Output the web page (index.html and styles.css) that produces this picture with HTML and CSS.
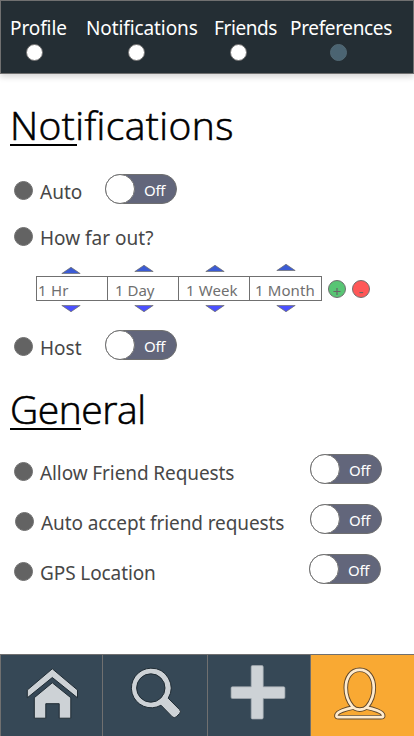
FILE: index.html
```html
<!DOCTYPE html>
<html lang="en">
<head>
<meta charset="utf-8">
<title>Preferences</title>
<link rel="stylesheet" href="styles.css">
</head>
<body>
<div class="app">
  <header class="topnav">
    <a class="nav-item profile"><span>Profile</span><i class="nav-dot"></i></a>
    <a class="nav-item notifications"><span>Notifications</span><i class="nav-dot"></i></a>
    <a class="nav-item friends"><span>Friends</span><i class="nav-dot"></i></a>
    <a class="nav-item preferences"><span>Preferences</span><i class="nav-dot current"></i></a>
  </header>

  <main class="content">
    <section class="section-notifications">
      <h1 class="title title-notifications">Notifications</h1>
      <div class="row row-auto"><i class="bullet"></i><span class="label auto">Auto</span><div class="toggle"><i class="knob"></i><span>Off</span></div></div>
      <div class="row row-far"><i class="bullet"></i><span class="label far">How far out?</span></div>
      <div class="stepper-row">
        <div class="stepper">
          <div class="step hr"><svg class="up" viewBox="0 0 20 7"><path d="M.8 6.600 10 .3l9.200 6.300z"/></svg><div class="cell"><span>1 Hr</span></div><svg class="down" viewBox="0 0 20 7"><path d="M.8.4 10 6.700 19.200.4z"/></svg></div>
          <div class="step day"><svg class="up" viewBox="0 0 20 7"><path d="M.8 6.600 10 .3l9.200 6.300z"/></svg><div class="cell"><span>1 Day</span></div><svg class="down" viewBox="0 0 20 7"><path d="M.8.4 10 6.700 19.200.4z"/></svg></div>
          <div class="step week"><svg class="up" viewBox="0 0 20 7"><path d="M.8 6.600 10 .3l9.200 6.300z"/></svg><div class="cell"><span>1 Week</span></div><svg class="down" viewBox="0 0 20 7"><path d="M.8.4 10 6.700 19.200.4z"/></svg></div>
          <div class="step month"><svg class="up" viewBox="0 0 20 7"><path d="M.8 6.600 10 .3l9.200 6.300z"/></svg><div class="cell"><span>1 Month</span></div><svg class="down" viewBox="0 0 20 7"><path d="M.8.4 10 6.700 19.200.4z"/></svg></div>
        </div>
        <button class="round add">+</button>
        <button class="round remove">-</button>
      </div>
      <div class="row row-host"><i class="bullet"></i><span class="label host">Host</span><div class="toggle"><i class="knob"></i><span>Off</span></div></div>
    </section>

    <section class="section-general">
      <h1 class="title title-general">General</h1>
      <div class="row wide"><i class="bullet"></i><span class="label allow">Allow Friend Requests</span><div class="toggle"><i class="knob"></i><span>Off</span></div></div>
      <div class="row wide accept-row"><i class="bullet"></i><span class="label accept">Auto accept friend requests</span><div class="toggle"><i class="knob"></i><span>Off</span></div></div>
      <div class="row wide gps-row"><i class="bullet"></i><span class="label gps">GPS Location</span><div class="toggle"><i class="knob"></i><span>Off</span></div></div>
    </section>
  </main>

  <nav class="tabbar">
    <a class="tab"><svg viewBox="0 0 103 81"><g class="glyph"><path d="M51.3 13.8 76.5 35v7.8L51.3 22.5 26.3 42.8V35z"/><path d="M51.3 27.8 69.8 42.7v20.5H58.2V48.7H44.8v14.5H33.3V42.7z"/></g></svg></a>
    <a class="tab"><svg viewBox="0 0 103 81"><path class="glyph" fill-rule="evenodd" d="M47.8 13.2a19.8 19.8 0 1 0 10.2 37l11.2 11.5q2 2 4.1.1l3.2-3.2q2-2 0-4L65.2 43.2A19.8 19.8 0 0 0 47.8 13.2zm0 5.6a14.2 14.2 0 1 1 0 28.4 14.2 14.2 0 0 1 0-28.4z"/></svg></a>
    <a class="tab"><svg viewBox="0 0 103 81"><path class="plus" d="M44.500 10.600h9.400q1.300 0 1.300 1.300v19.900h20.400q1.300 0 1.300 1.300v9.100q0 1.300-1.300 1.300H55.200v19.200q0 1.300-1.300 1.300H44.500q-1.300 0-1.300-1.300V43.500H24.400q-1.300 0-1.300-1.300v-9.100q0-1.300 1.300-1.300h18.800V11.900q0-1.300 1.300-1.300z"/></svg></a>
    <a class="tab selected"><svg viewBox="0 0 103 81"><g class="person"><path d="M48.800 14.800c-9 0-14 8.400-14 18 0 9 3.200 14.800 6.600 18.800 2.300 2.600 4.600 3 7.400 3s5.100-.4 7.400-3c3.400-4 6.600-9.800 6.600-18.800 0-9.600-5-18-14-18z"/><path d="M42.300 52.600C35 53.700 26.200 57 25.500 60c-.5 2 .5 2.200 2.500 2.200h41.600c2 0 3-.2 2.500-2.200-.7-3-9.500-6.300-16.800-7.400"/></g><g class="person-light"><path d="M48.800 14.800c-9 0-14 8.400-14 18 0 9 3.200 14.800 6.600 18.800 2.300 2.600 4.600 3 7.400 3s5.100-.4 7.400-3c3.400-4 6.600-9.800 6.600-18.800 0-9.600-5-18-14-18z"/><path d="M42.300 52.600C35 53.700 26.200 57 25.500 60c-.5 2 .5 2.200 2.500 2.200h41.600c2 0 3-.2 2.500-2.200-.7-3-9.500-6.300-16.800-7.400"/></g></svg></a>
  </nav>
</div>
</body>
</html>
```
FILE: styles.css
```css
* { box-sizing: border-box; }
body { margin: 0; background: #fff; font-family: "Noto Sans", "Open Sans", sans-serif; }
i { display: block; }
.app { width: 414px; height: 736px; display: flex; flex-direction: column; overflow: hidden; }

.topnav { height: 74px; flex: none; display: flex; padding: 13px 0 0 9px; background: #242e34; border: 1px solid #707070; box-shadow: 0 3px 6px rgba(0,0,0,.16); color: #fff; }
.nav-item { height: 50px; font-size: 19px; line-height: 28px; letter-spacing: -.1px; white-space: nowrap; }
.nav-item span { display: block; }
.nav-dot { width: 17px; height: 17px; border-radius: 50%; background: #fff; border: 1px solid #707070; margin-top: 2px; }
.nav-dot.current { background: #4b6472; border-color: #526974; }
.profile { width: 76px; }
.notifications { width: 128px; }
.friends { width: 76px; letter-spacing: -.4px; }
.preferences { letter-spacing: -.35px; }
.profile .nav-dot, .friends .nav-dot { margin-left: 16px; }
.notifications .nav-dot { margin-left: 42px; }
.preferences .nav-dot { margin-left: 40px; }

.content { flex: 1; }
.section-notifications { height: 311px; padding-top: 25px; }
.title { margin: 0 0 0 10px; height: 56px; font-family: "Open Sans", "Noto Sans", sans-serif; font-size: 39px; line-height: 52px; font-weight: 300; -webkit-text-stroke: .6px #000; color: #000; background: linear-gradient(#000, #000) no-repeat 0 45px; white-space: nowrap; }
.title-notifications { background-size: 67px 2px; letter-spacing: .4px; }
.title-general { background-size: 71px 2px; letter-spacing: -.45px; }

.row { display: flex; align-items: center; height: 30px; padding-left: 14px; }
.bullet { width: 19px; height: 19px; flex: none; border-radius: 50%; background: #636363; border: 1px solid #707070; }
.label { margin-left: 7px; padding-top: 3px; width: 65px; font-size: 19px; line-height: 27px; color: #474747; white-space: nowrap; }
.toggle { display: flex; width: 72px; height: 30px; flex: none; border: 1px solid #707070; border-radius: 15px; background: #62667b; }
.knob { width: 30px; height: 30px; margin: -1px 0 0 -1px; flex: none; border: 1px solid #707070; border-radius: 50%; background: #fff; }
.toggle span { margin-left: 9px; font-size: 15px; line-height: 31px; letter-spacing: -.3px; color: #fff; }
.row-auto { margin-top: 19px; }
.row-auto .bullet, .row-host .bullet { margin-top: 3px; }
.row-auto .label, .row-host .label { padding-top: 7px; }
.row-far { margin-top: 18px; }
.row-far .bullet { margin-top: -1px; }

.stepper-row { display: flex; height: 50px; margin-top: 12px; padding-left: 36px; }
.stepper { display: flex; width: 286px; margin-right: 6px; }
.step { width: 71px; display: flex; flex-direction: column; padding-bottom: 2px; }
.step svg { width: 20px; height: 7px; flex: none; margin-left: 25px; stroke: #707070; stroke-width: .8; }
.up { fill: #3b5bd5; }
.down { fill: #4b50ff; margin-top: 4px; }
.cell { height: 25px; margin-top: auto; border: 1px solid #707070; border-right: 0; color: #6f6f6f; font-size: 15px; line-height: 27px; white-space: nowrap; }
.step .up { margin-top: 3px; }
.step.day .up, .step.week .up { margin-top: 1px; }
.step.month .up { margin-top: 0; }
.step.day svg, .step.week svg, .step.month svg { margin-left: 27px; }
.step.month { width: 73px; }
.month .cell { border-right: 1px solid #707070; padding-left: 5px; letter-spacing: .1px; }
.hr .cell { padding-left: 1px; letter-spacing: .2px; }
.day .cell { padding-left: 7px; }
.week .cell { padding-left: 7px; letter-spacing: .1px; }
.round { width: 18px; height: 18px; margin: 16px 6px 0 0; padding: 3px 0 0; border: 1px solid #707070; border-radius: 50%; font: 15px/14px "Noto Sans", sans-serif; color: #666; text-align: center; }
.add { background: #58c574; }
.remove { background: #ff5757; }
.row-host { margin-top: 16px; }

.title-general { height: 55px; margin-top: -2px; }
.wide { margin-top: 16px; }
.wide .label { width: 270px; padding-top: 9px; letter-spacing: -.1px; }
.wide .bullet { margin-top: 5px; }
.accept-row, .gps-row { margin-top: 20px; }
.accept-row { padding-left: 15px; }
.accept-row .label, .gps-row .label { width: 269px; }

.tabbar { height: 82px; flex: none; display: grid; grid-template-columns: 102px 105px 103px 104px; background: #364856; border: 1px solid #707070; border-width: 1px 0 0 1px; }
.tab { border-right: 1px solid #707070; }
.tab svg { display: block; width: 103px; height: 81px; }
.glyph { fill: #cdd2d6; stroke: #202c34; stroke-width: 1; }
.plus { fill: #cdd2d6; stroke: #a4abb0; stroke-width: .7; }
.selected { background: #f9a933; }
.person, .person-light { fill: none; stroke: #60482c; stroke-width: 4.6; stroke-linejoin: round; }
.person-light { stroke: #ffebcd; stroke-width: 2.7; }
```
